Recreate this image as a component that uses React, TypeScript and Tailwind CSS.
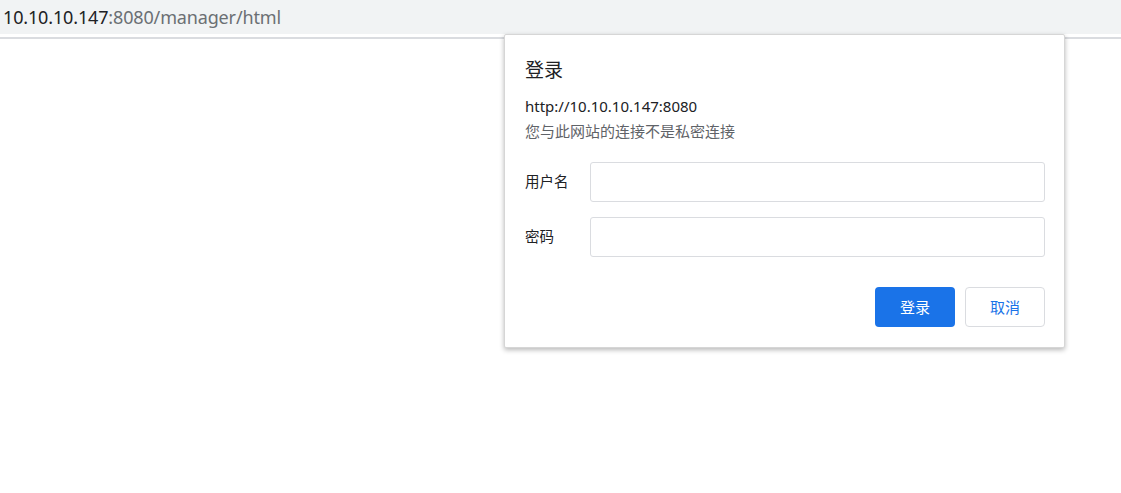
export default function App() {
  return (
    <div className="relative h-[493px] w-full overflow-hidden bg-white font-['Noto_Sans','Noto_Sans_CJK_SC',sans-serif]">
      {/* address bar */}
      <div className="flex h-[34px] items-center bg-[#f1f3f4] pl-[3px] text-[18px] leading-none tracking-[-0.15px]">
        <span className="text-[#202124]">10.10.10.147</span>
        <span className="text-[#6b6f73]">:8080/manager/html</span>
      </div>
      <div className="h-[3px] bg-white" />
      <div className="h-[2px] bg-[#dadce0]" />

      {/* basic auth dialog */}
      <div className="absolute left-[504px] top-[34px] w-[561px] rounded-[2px] border border-[#d6d6d6] bg-white pb-[20px] pl-[20px] pr-[19px] pt-[21px] shadow-[0_2px_5px_rgba(0,0,0,0.28)]">
        <h2 className="text-[19px] leading-[28px] text-[#202124]">登录</h2>
        <p className="mt-[12px] text-[15px] leading-[20px] text-[#202124]">http://10.10.10.147:8080</p>
        <p className="mt-[5px] text-[15px] leading-[20px] text-[#5f6368]">您与此网站的连接不是私密连接</p>

        <div className="mt-[21px] flex flex-col gap-[15px]">
          <label className="flex items-center">
            <span className="w-[65px] text-[14.5px] text-[#202124]">用户名</span>
            <input className="h-[40px] flex-1 rounded-[3px] border border-[#dadce0] px-2 text-[14px] outline-none" />
          </label>
          <label className="flex items-center">
            <span className="w-[65px] text-[14.5px] text-[#202124]">密码</span>
            <input type="password" className="h-[40px] flex-1 rounded-[3px] border border-[#dadce0] px-2 text-[14px] outline-none" />
          </label>
        </div>

        <div className="mt-[30px] flex justify-end gap-[10px]">
          <button className="h-[40px] w-[80px] rounded-[4px] bg-[#1a73e8] text-[15px] text-white">登录</button>
          <button className="h-[40px] w-[80px] rounded-[4px] border border-[#dadce0] bg-white text-[15px] text-[#1a73e8]">取消</button>
        </div>
      </div>
    </div>
  );
}
